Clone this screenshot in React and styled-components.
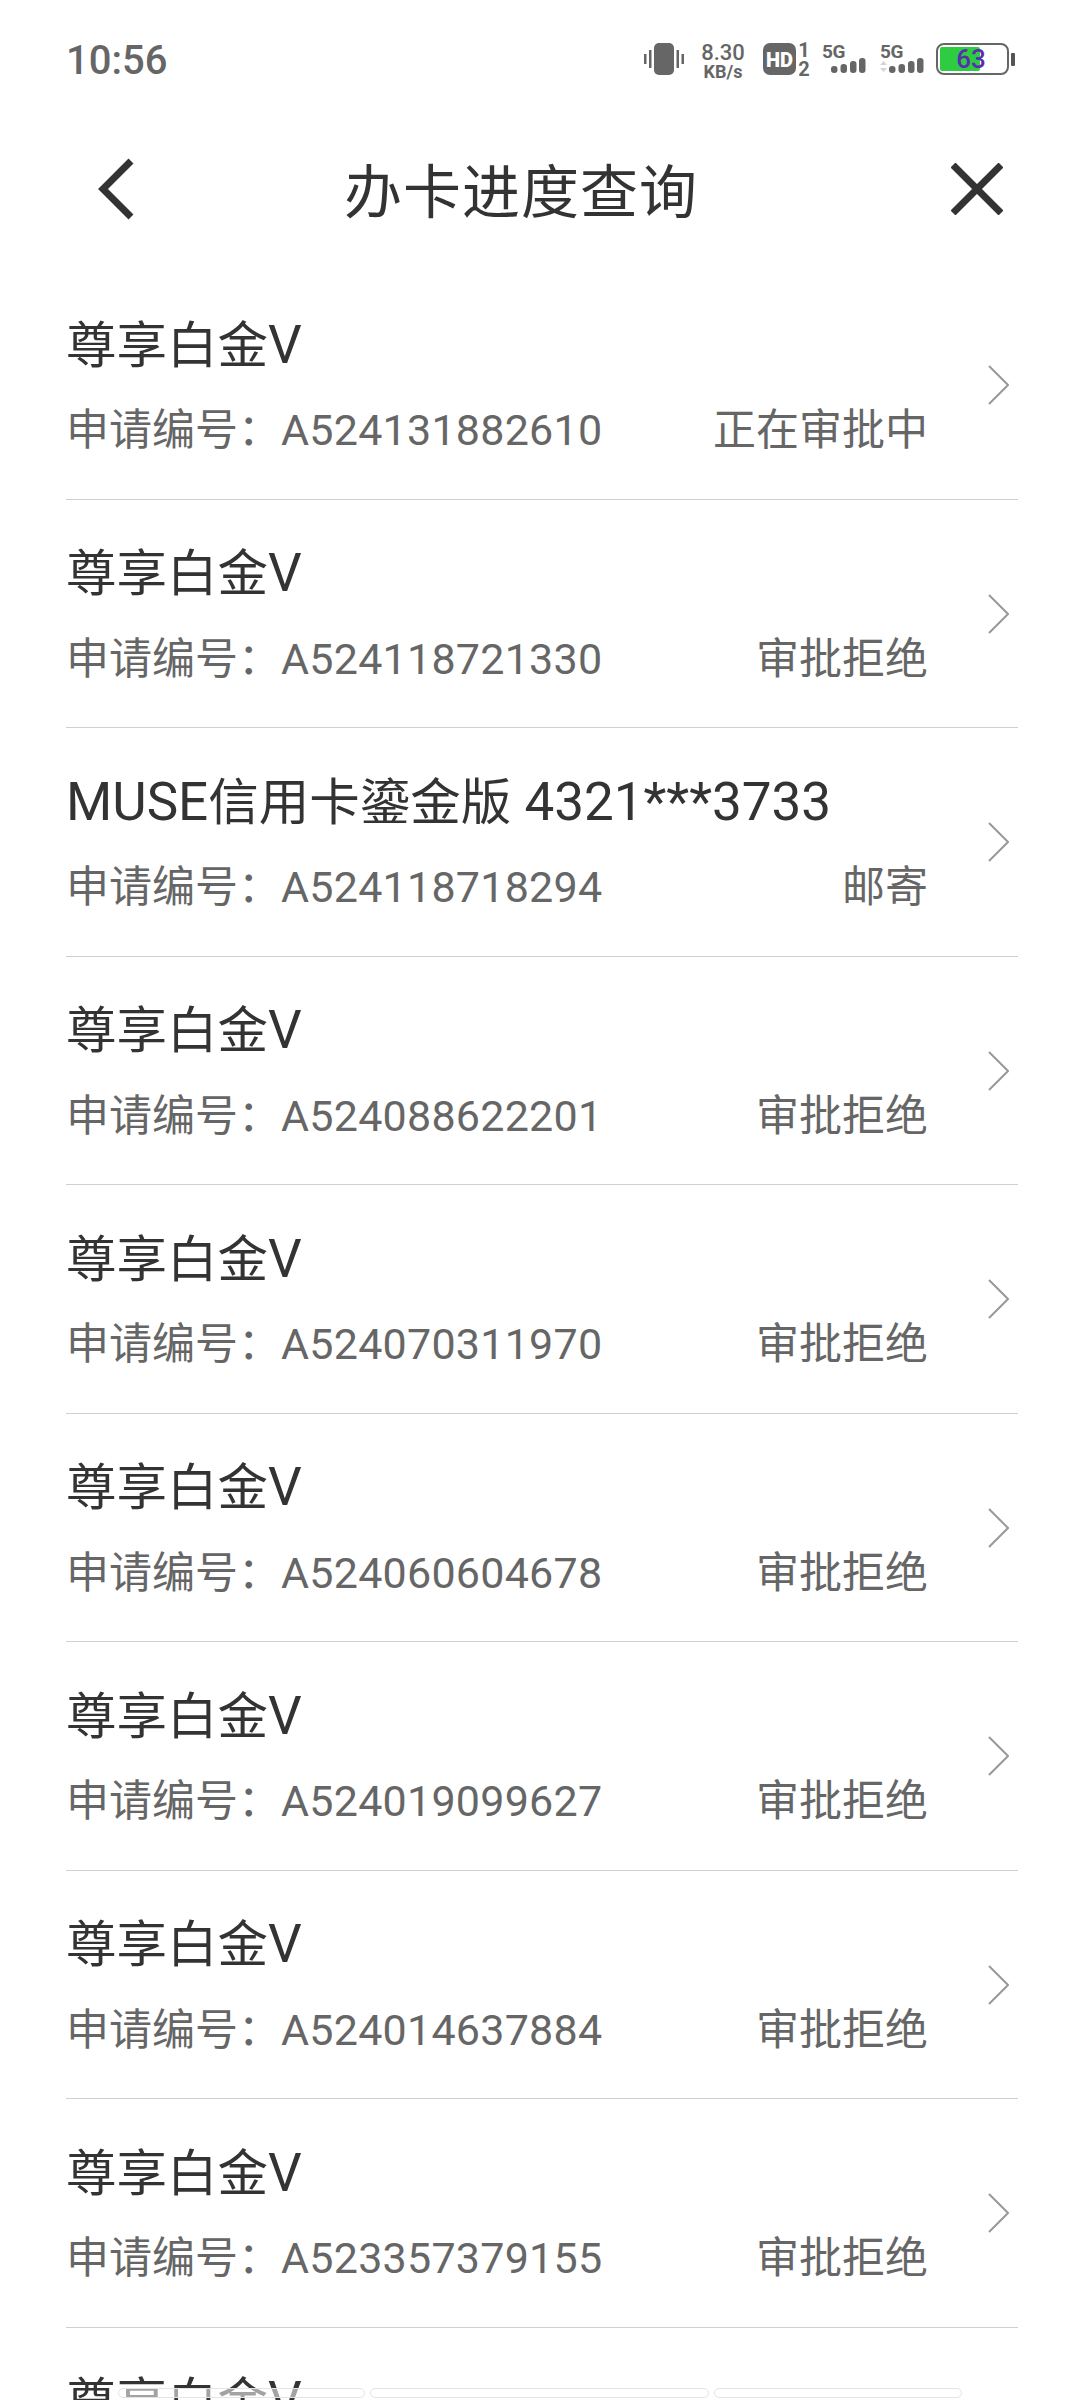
import React from "react";
import styled, { createGlobalStyle } from "styled-components";

const Global = createGlobalStyle`
  html, body { margin: 0; padding: 0; background: #fff; }
  body { width: 1080px; height: 2400px; overflow: hidden; font-family: "Roboto", "Noto Sans CJK SC", sans-serif; }
`;
const Page = styled.div`
  position: relative;
  width: 1080px;
  height: 2400px;
  overflow: hidden;
  background: #fff;
`;
const StatusBar = styled.div`
  height: 120px;
  padding: 0 65px 0 66px;
  box-sizing: border-box;
  display: flex;
  align-items: center;
  justify-content: space-between;
  color: #666;
`;
const Time = styled.div`
  font: 500 40px/48px "Roboto", sans-serif;
  padding-top: 2px;
`;
const StatusIcons = styled.div`
  display: flex;
  align-items: flex-start;
  height: 32px;
  margin-bottom: 2px;
`;
const Glyph = styled.svg`
  display: block;
  flex: none;
  overflow: visible;
  margin-left: ${(p) => p.$gap || 0}px;
`;
const Speed = styled.div`
  width: 46px;
  margin-left: 16px;
  margin-right: -1px;
  text-align: center;
  font-family: "Roboto", sans-serif;
  font-weight: 500;
  white-space: nowrap;
`;
const SpeedValue = styled.div`
  font-size: 22px;
  line-height: 19px;
`;
const SpeedUnit = styled.div`
  font-size: 18px;
  line-height: 19px;
  font-weight: 700;
`;
const NavBar = styled.div`
  height: 136px;
  display: grid;
  grid-template-columns: 246px auto 1fr;
  align-items: center;
  padding: 0 77px 0 98px;
`;
const Title = styled.div`
  font: 400 58px/70px "Noto Sans CJK SC", sans-serif;
  color: #333;
  letter-spacing: 1px;
`;
const Back = styled.svg`
  margin-top: 2px;
`;
const Close = styled.svg`
  justify-self: end;
  margin-top: 2px;
`;
const List = styled.div`
  padding: 15px 62px 0 66px;
`;
const Row = styled.div`
  height: 228.5px;
  box-sizing: border-box;
  border-bottom: 1.5px solid #d0d0d0;
  display: flex;
  flex-direction: column;
  position: relative;
`;
const Name = styled.div`
  margin-top: 37.5px;
  height: 64px;
  font: 400 50.5px/64px "Noto Sans CJK SC", "Roboto", sans-serif;
  color: #333;
  white-space: pre;
`;
const Latin = styled.span`
  font-family: "Roboto", sans-serif;
  font-size: 53px;
`;
const Meta = styled.div`
  margin-top: 29.5px;
  width: 862px;
  display: flex;
  justify-content: space-between;
  font: 400 43px/56px "Roboto", "Noto Sans CJK SC", sans-serif;
  color: #666;
  white-space: nowrap;
`;
const Code = styled.span`
  letter-spacing: 0.25px;
`;
const Chevron = styled.svg`
  position: absolute;
  right: 9px;
  top: 94px;
`;
const Shade = styled.div`
  display: flex;
  position: absolute;
  left: 118px;
  top: 2388px;
  gap: 5px;
`;
const Pill = styled.span`
  width: ${(p) => p.$w}px;
  height: 10px;
  box-sizing: border-box;
  border: 1.5px solid #e4e4e4;
  border-radius: 5px;
  background: rgba(255, 255, 255, 0.55);
`;

const rows = [
  ["尊享白金V", "A524131882610", "正在审批中"],
  ["尊享白金V", "A524118721330", "审批拒绝"],
  ["MUSE信用卡鎏金版 4321***3733", "A524118718294", "邮寄"],
  ["尊享白金V", "A524088622201", "审批拒绝"],
  ["尊享白金V", "A524070311970", "审批拒绝"],
  ["尊享白金V", "A524060604678", "审批拒绝"],
  ["尊享白金V", "A524019099627", "审批拒绝"],
  ["尊享白金V", "A524014637884", "审批拒绝"],
  ["尊享白金V", "A523357379155", "审批拒绝"],
];

const CardName = ({ text }) => (
  <Name>
    {text.split(/([A-Za-z0-9* ]+)/).map((part, i) =>
      i % 2 ? <Latin key={i}>{part}</Latin> : part
    )}
  </Name>
);

const Signal = ({ up, gap }) => (
  <Glyph $gap={gap} width="43" height="32" viewBox="0 0 43 32" fill="#666">
    <text x="0" y="15" fontFamily="Roboto" fontWeight="700" fontSize="19" letterSpacing="-0.3">5G</text>
    {[[9, 7], [18.5, 9], [28, 12], [37, 15]].map(([x, h]) => (
      <rect key={x} x={x} y={30 - h} width="6.5" height={h} rx="3" />
    ))}
    {up && <path d="M0 22l3.5-4 3.5 4zM0 25l3.5 4 3.5-4z" fill="#d4d4d4" />}
  </Glyph>
);

export default function App() {
  return (
    <Page>
      <Global />
      <StatusBar>
        <Time>10:56</Time>
        <StatusIcons>
          <Glyph width="40" height="32" viewBox="0 0 40 32" fill="#666">
            <rect x="10" y="0" width="20" height="32" rx="5" />
            <rect x="0" y="11" width="2.5" height="10" />
            <rect x="5" y="7" width="2.5" height="18" />
            <rect x="32.5" y="7" width="2.5" height="18" />
            <rect x="37.5" y="11" width="2.5" height="10" />
          </Glyph>
          <Speed>
            <SpeedValue>8.30</SpeedValue>
            <SpeedUnit>KB/s</SpeedUnit>
          </Speed>
          <Glyph $gap={18} width="46" height="33" viewBox="0 0 46 33" fill="#666">
            <rect x="0" y="0" width="33" height="32" rx="7" />
            <text x="16.5" y="23.5" textAnchor="middle" fontFamily="Roboto" fontWeight="900" fontSize="20" fill="#fff">HD</text>
            <text x="41" y="14" textAnchor="middle" fontFamily="Roboto" fontWeight="700" fontSize="20">1</text>
            <text x="41" y="33" textAnchor="middle" fontFamily="Roboto" fontWeight="700" fontSize="20">2</text>
          </Glyph>
          <Signal gap={13} />
          <Signal up gap={15} />
          <Glyph $gap={13} width="79" height="32" viewBox="0 0 79 32">
            <rect x="1" y="1" width="71" height="30" rx="7" fill="#fff" stroke="#666" strokeWidth="2" />
            <rect x="4" y="4" width="40" height="24" rx="2" fill="#2ecc40" />
            <rect x="75" y="10" width="4" height="13" rx="1" fill="#555" />
            <text x="35" y="25" textAnchor="middle" fontFamily="Roboto" fontWeight="500" fontSize="26" fill="#5a2db0">63</text>
          </Glyph>
        </StatusIcons>
      </StatusBar>
      <NavBar>
        <Back width="36" height="62" viewBox="0 0 36 62" fill="none" stroke="#333" strokeWidth="7">
          <path d="M33 3 L5 31 L33 59" />
        </Back>
        <Title>办卡进度查询</Title>
        <Close width="52" height="52" viewBox="0 0 52 52" fill="none" stroke="#333" strokeWidth="7">
          <path d="M2 2 L50 50 M50 2 L2 50" />
        </Close>
      </NavBar>
      <List>
        {rows.map((r) => (
          <Row key={r[1]}>
            <CardName text={r[0]} />
            <Meta>
              <span>申请编号：<Code>{r[1]}</Code></span>
              <span>{r[2]}</span>
            </Meta>
            <Chevron width="21" height="40" viewBox="0 0 21 40" fill="none" stroke="#999" strokeWidth="2">
              <path d="M1 1 L20 20 L1 39" />
            </Chevron>
          </Row>
        ))}
        <CardName text="尊享白金V" />
      </List>
      <Shade>
        <Pill $w={247} />
        <Pill $w={339} />
        <Pill $w={248} />
      </Shade>
    </Page>
  );
}
